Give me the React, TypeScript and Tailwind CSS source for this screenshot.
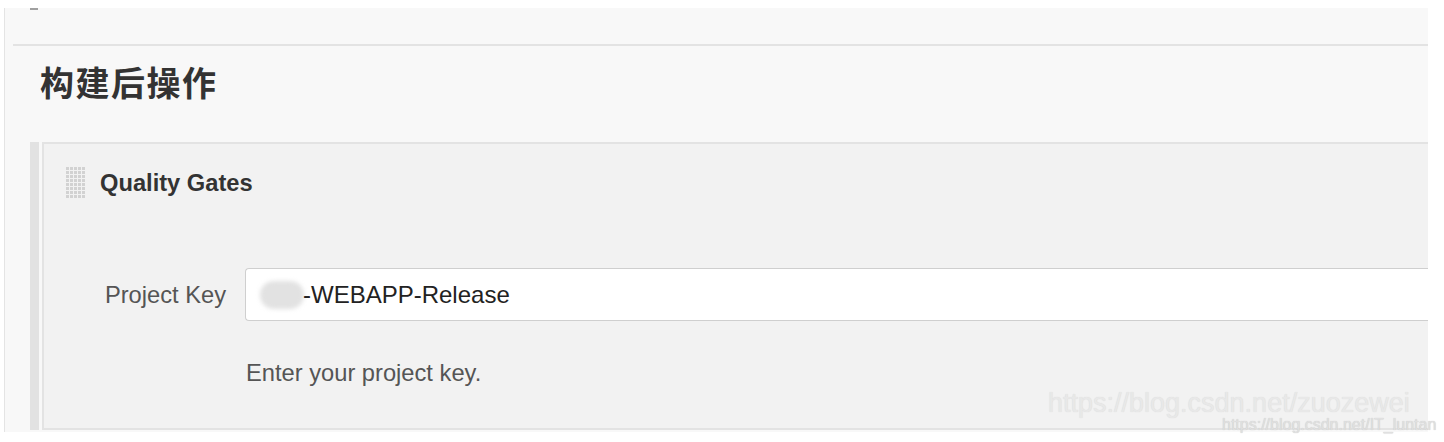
import React from "react";

const sans = { fontFamily: '"Liberation Sans", Arial, sans-serif' };

function Grip() {
  const dots: JSX.Element[] = [];
  for (let r = 0; r < 8; r++) {
    for (let c = 0; c < 5; c++) {
      dots.push(<rect key={`${r}-${c}`} x={c * 4} y={r * 4} width={3} height={3} fill="#d2d2d2" />);
    }
  }
  return (
    <svg width="20" height="31" viewBox="0 0 20 31" className="shrink-0">
      {dots}
    </svg>
  );
}

export default function App() {
  return (
    <div className="relative w-[1444px] h-[442px] overflow-hidden bg-white" style={sans}>
      <div className="ml-[4px] mt-[8px] flex h-[424px] w-[1424px] flex-col border-l border-[#e4e4e4] bg-[#f8f8f8]">
        <div className="h-[36px]">
          <div className="ml-[25px] h-[2px] w-[8px] bg-[#a0a0a0]" />
        </div>
        <div className="ml-[8px] border-t-2 border-[#e3e3e3]" />
        <div className="flex h-[96px] items-center pb-[24px] pl-[35px]">
          <h1
            className="text-[34px] font-bold leading-none tracking-[1.5px] text-[#333]"
            style={{ fontFamily: '"Noto Sans CJK SC", "Liberation Sans", sans-serif' }}
          >
            构建后操作
          </h1>
        </div>
        <div className="flex flex-1 pb-[2px]">
          <div className="ml-[25px] w-[9px] bg-[#e2e2e2]" />
          <div className="ml-[3px] flex-1 border-y-2 border-l-2 border-[#e3e3e3] bg-[#f2f2f2]">
            <div className="flex items-center pl-[22px] pt-[23px]">
              <Grip />
              <span className="ml-[14px] text-[23.7px] font-bold leading-[30px] text-[#333]">Quality Gates</span>
            </div>
            <div className="mt-[70px] flex items-center">
              <label className="w-[182px] text-right text-[23.7px] leading-[28px] text-[#555]">Project Key</label>
              <div className="relative ml-[19px] flex h-[53px] flex-1 items-center rounded-l-[4px] border-y border-l border-[#cfcfcf] bg-white pl-[57px]">
                <div className="absolute left-[14px] top-[12px] h-[28px] w-[44px] rounded-full bg-[#e2e2e2] blur-[2px]" />
                <span className="relative text-[24px] leading-[28px] text-[#222]">-WEBAPP-Release</span>
              </div>
            </div>
            <div className="mt-[38px] pl-[202px] text-[23.7px] leading-[28px] text-[#555]">Enter your project key.</div>
          </div>
        </div>
      </div>
      <div
        className="absolute left-[1048px] top-[388px] text-[27px] leading-[30px] text-[#e8e8e8]"
        style={{ textShadow: "0 0 1px #d6d6d6" }}
      >
        https://blog.csdn.net/zuozewei
      </div>
      <div
        className="absolute left-[1222px] top-[416px] text-[16px] leading-[18px] text-[#e0e0e0]"
        style={{ textShadow: "0 0 1px #c0c0c0" }}
      >
        https://blog.csdn.net/IT_luntan
      </div>
    </div>
  );
}
